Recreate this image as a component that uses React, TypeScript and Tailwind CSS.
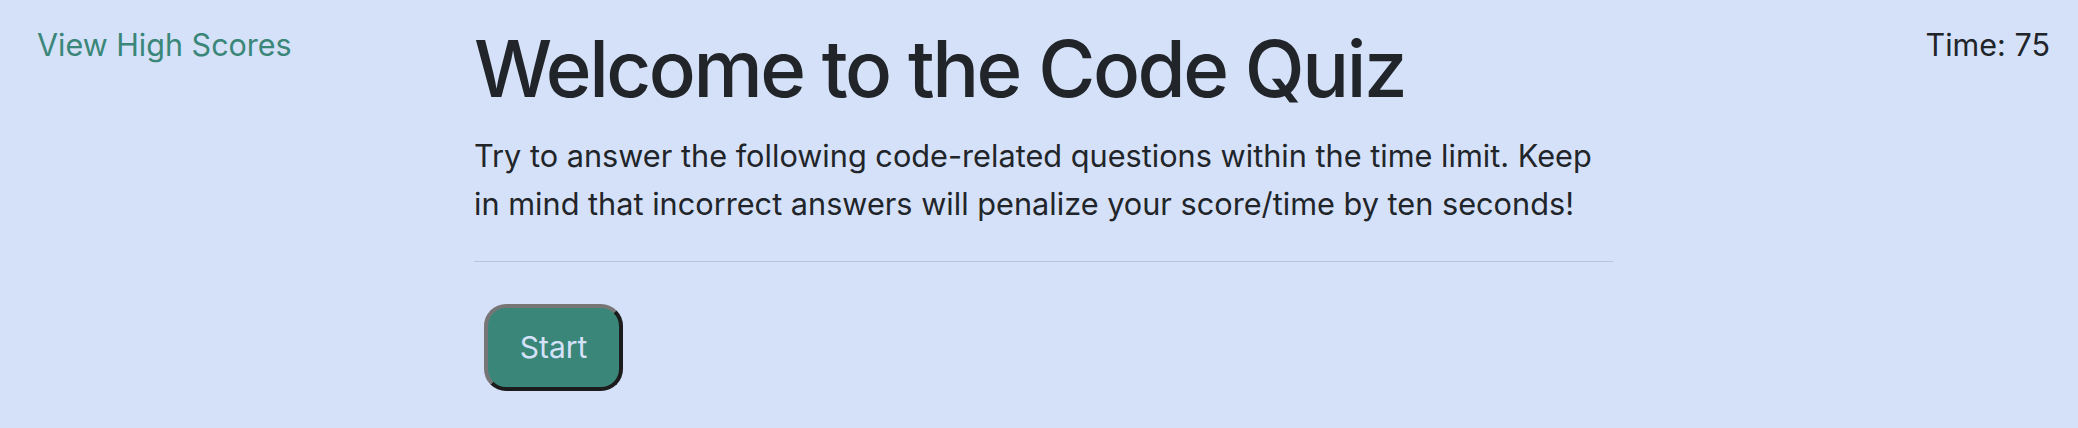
export default function App() {
  return (
    <div className="flex min-h-[428px] w-full bg-[#d5e1f8] font-['Inter','Liberation_Sans',sans-serif] text-[#212529]">
      <div className="w-[474px] shrink-0 pl-[37px] pt-[21px]">
        <a href="#" className="text-[30.5px] leading-[48px] text-[#3a8779]">
          View High Scores
        </a>
      </div>

      <main className="w-[1139px] shrink-0 pt-[21px]">
        <h1 className="text-[78px] font-medium leading-[96px] tracking-[-0.032em]">Welcome to the Code Quiz</h1>
        <p className="mt-[15px] text-[30.7px] leading-[48px]">
          Try to answer the following code-related questions within the time limit. Keep in mind that
          incorrect answers will penalize your score/time by ten seconds!
        </p>
        <hr className="mt-[33px] border-t border-[#b8c4dc]" />
        <button className="ml-[10px] mt-[42px] h-[87px] w-[139px] rounded-[22px] border-4 border-t-[#767676] border-l-[#767676] border-r-[#1c1c1c] border-b-[#1c1c1c] bg-[#3a8779] text-[30px] text-[#d5e1f8]">
          Start
        </button>
      </main>

      <div className="flex-1 pr-[28px] pt-[21px] text-right">
        <span className="text-[30.5px] leading-[48px]">Time: 75</span>
      </div>
    </div>
  );
}
